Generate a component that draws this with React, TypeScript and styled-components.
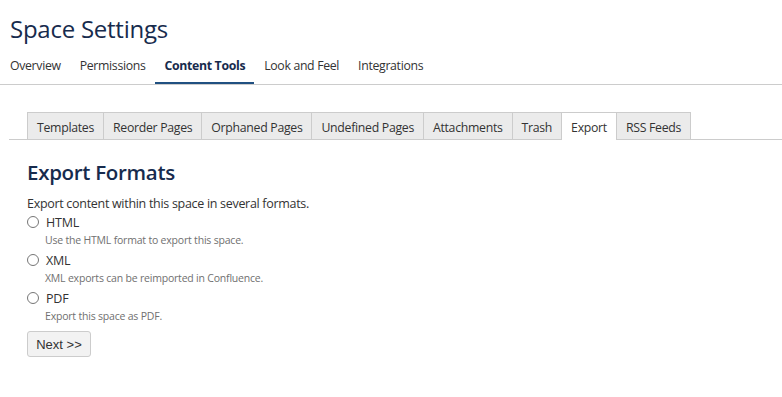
import React from "react";
import styled, { createGlobalStyle } from "styled-components";

const Global = createGlobalStyle`
  html, body { margin: 0; padding: 0; background: #fff; }
  body { font-family: "Open Sans", "Noto Sans", sans-serif; color: #333; }
`;

const Page = styled.div`
  width: 782px;
  height: 397px;
  overflow: hidden;
  background: #fff;
`;

const Title = styled.h1`
  margin: 0;
  padding: 12px 0 0 10px;
  height: 36px;
  font-size: 24px;
  font-weight: 400;
  line-height: 34px;
  color: #172b4d;
  letter-spacing: -0.25px;
`;

const Nav = styled.nav`
  display: flex;
  margin-top: 4px;
  border-bottom: 1px solid #ccc;
  height: 32px;
`;

const NavItem = styled.div<{ $active?: boolean }>`
  padding: 0 9px 0 10px;
  font-size: 12.3px;
  letter-spacing: -0.33px;
  line-height: 28px;
  height: 32px;
  box-sizing: border-box;
  color: ${(p) => (p.$active ? "#172b4d" : "#333")};
  font-weight: ${(p) => (p.$active ? 700 : 400)};
  border-bottom: 2px solid ${(p) => (p.$active ? "#205081" : "transparent")};
`;

const TabBar = styled.div`
  display: flex;
  margin: 27px 0 0 9px;
  padding-left: 18px;
  border-bottom: 1px solid #ccc;
`;

const Tab = styled.div<{ $active?: boolean }>`
  box-sizing: border-box;
  line-height: 25px;
  padding: 2px 9px 0;
  font-size: 12.3px;
  letter-spacing: -0.3px;
  color: #333;
  background: ${(p) => (p.$active ? "#fff" : "#ebebeb")};
  border: 1px solid #ccc;
  border-bottom: none;
  margin-bottom: ${(p) => (p.$active ? "-1px" : "0")};
  height: ${(p) => (p.$active ? "28px" : "27px")};
  & + & {
    border-left: none;
  }
`;

const Content = styled.div`
  padding: 18px 0 0 27px;
`;

const Heading = styled.h2`
  margin: 0;
  font-size: 20.5px;
  font-weight: 600;
  line-height: 28px;
  color: #172b4d;
  letter-spacing: -0.3px;
`;

const Intro = styled.p`
  margin: 9px 0 0;
  font-size: 12.5px;
  line-height: 18px;
  letter-spacing: -0.3px;
  color: #333;
`;

const Option = styled.div`
  display: flex;
  flex-direction: column;
  margin-bottom: 1px;
`;

const OptionRow = styled.label`
  display: flex;
  align-items: center;
  height: 18px;
  font-size: 12.5px;
  letter-spacing: -0.2px;
  color: #333;
`;

const Radio = styled.span`
  width: 10px;
  height: 10px;
  border: 1px solid #767676;
  border-radius: 50%;
  margin-right: 7px;
  background: #fff;
`;

const Desc = styled.div`
  padding-left: 18px;
  font-size: 10.5px;
  line-height: 19px;
  color: #707070;
  letter-spacing: -0.2px;
`;

const Button = styled.button`
  margin-top: 4px;
  width: 64px;
  height: 26px;
  background: #f2f2f2;
  border: 1px solid #ccc;
  border-radius: 3px;
  font-family: "Liberation Sans", Arial, sans-serif;
  font-size: 13px;
  color: #333;
  padding: 0;
`;

const navItems = ["Overview", "Permissions", "Content Tools", "Look and Feel", "Integrations"];
const tabs = ["Templates", "Reorder Pages", "Orphaned Pages", "Undefined Pages", "Attachments", "Trash", "Export", "RSS Feeds"];
const options = [
  { name: "HTML", desc: "Use the HTML format to export this space." },
  { name: "XML", desc: "XML exports can be reimported in Confluence." },
  { name: "PDF", desc: "Export this space as PDF." },
];

export default function App() {
  return (
    <Page>
      <Global />
      <Title>Space Settings</Title>
      <Nav>
        {navItems.map((n) => (
          <NavItem key={n} $active={n === "Content Tools"}>
            {n}
          </NavItem>
        ))}
      </Nav>
      <TabBar>
        {tabs.map((t) => (
          <Tab key={t} $active={t === "Export"}>
            {t}
          </Tab>
        ))}
      </TabBar>
      <Content>
        <Heading>Export Formats</Heading>
        <Intro>Export content within this space in several formats.</Intro>
        {options.map((o) => (
          <Option key={o.name}>
            <OptionRow>
              <Radio />
              {o.name}
            </OptionRow>
            <Desc>{o.desc}</Desc>
          </Option>
        ))}
        <Button>Next &gt;&gt;</Button>
      </Content>
    </Page>
  );
}
